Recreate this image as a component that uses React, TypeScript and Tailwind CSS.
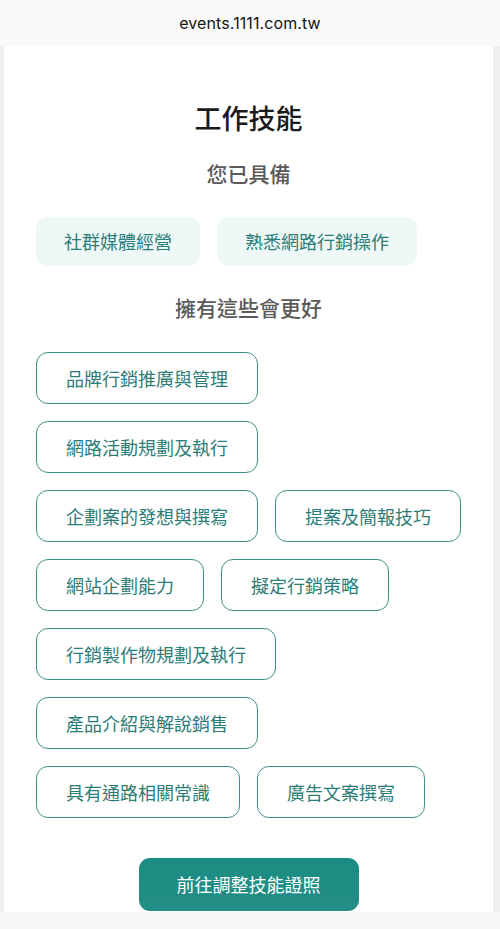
import React from 'react';

const owned = ['社群媒體經營', '熟悉網路行銷操作'];

const suggested: string[][] = [
  ['品牌行銷推廣與管理'],
  ['網路活動規劃及執行'],
  ['企劃案的發想與撰寫', '提案及簡報技巧'],
  ['網站企劃能力', '擬定行銷策略'],
  ['行銷製作物規劃及執行'],
  ['產品介紹與解說銷售'],
  ['具有通路相關常識', '廣告文案撰寫'],
];

const cjk = { fontFamily: '"Noto Sans CJK TC", "Noto Sans", sans-serif' };

export default function App() {
  return (
    <div className="w-[500px] h-[929px] flex flex-col bg-[#efefef] overflow-hidden" style={cjk}>
      {/* browser url bar */}
      <div className="h-[46px] shrink-0 bg-[#fafafa] flex items-center justify-center">
        <span className="text-[16px] text-[#141414] tracking-[0.1px]" style={{ fontFamily: 'Inter, "Liberation Sans", sans-serif' }}>
          events.1111.com.tw
        </span>
      </div>

      <div className="flex-1 ml-[4px] mr-[7px] bg-white flex flex-col px-[32px]">
        <h1 className="mt-[53px] text-center text-[27px] leading-[38px] font-medium text-[#1a1a1a]">工作技能</h1>
        <h2 className="mt-[21px] text-center text-[21px] leading-[30px] font-medium text-[#5a5a5a]">您已具備</h2>

        <div className="mt-[29px] flex gap-[17px]">
          {owned.map((s) => (
            <div key={s} className="h-[49px] px-[28px] flex items-center rounded-[12px] bg-[#eef8f7] text-[18px] text-[#2b7d77]">
              {s}
            </div>
          ))}
        </div>

        <h2 className="mt-[26px] text-center text-[21px] leading-[30px] font-medium text-[#5a5a5a]">擁有這些會更好</h2>

        <div className="mt-[30px] flex flex-col gap-[17px]">
          {suggested.map((row, i) => (
            <div key={i} className="flex gap-[17px]">
              {row.map((s) => (
                <div
                  key={s}
                  className="h-[52px] px-[29px] flex items-center rounded-[12px] border-[1.5px] border-[#3f8f89] text-[18px] text-[#2b7d77]"
                >
                  {s}
                </div>
              ))}
            </div>
          ))}
        </div>

        <div className="mt-[40px] flex justify-center">
          <button className="w-[220px] h-[53px] rounded-[11px] bg-gradient-to-b from-[#1b8c82] to-[#238e85] text-white text-[18px]">
            前往調整技能證照
          </button>
        </div>
      </div>
      <div className="h-[17px] shrink-0 bg-[#f6f6f6]" />
    </div>
  );
}
